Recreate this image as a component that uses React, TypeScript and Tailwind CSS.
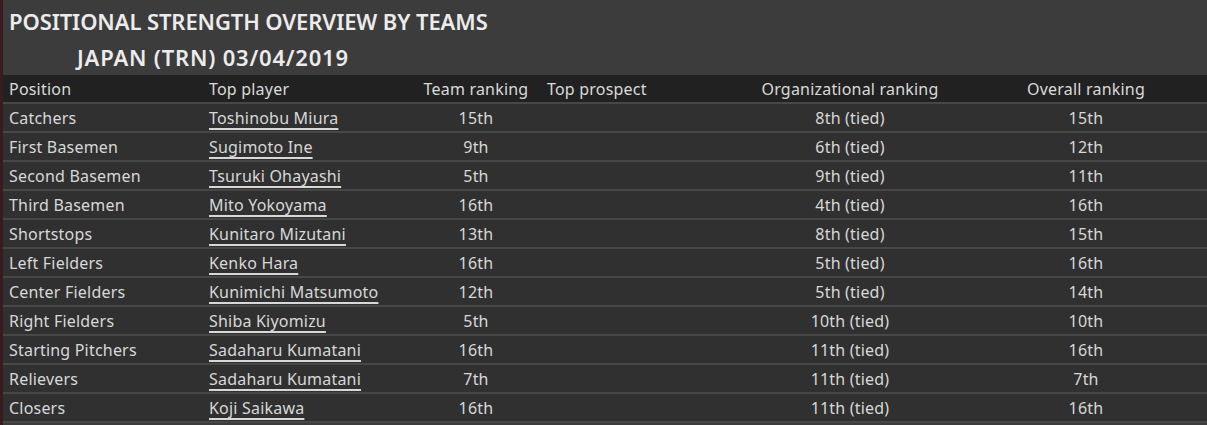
import React from "react";

const rows = [
  ["Catchers", "Toshinobu Miura", "15th", "8th (tied)", "15th"],
  ["First Basemen", "Sugimoto Ine", "9th", "6th (tied)", "12th"],
  ["Second Basemen", "Tsuruki Ohayashi", "5th", "9th (tied)", "11th"],
  ["Third Basemen", "Mito Yokoyama", "16th", "4th (tied)", "16th"],
  ["Shortstops", "Kunitaro Mizutani", "13th", "8th (tied)", "15th"],
  ["Left Fielders", "Kenko Hara", "16th", "5th (tied)", "16th"],
  ["Center Fielders", "Kunimichi Matsumoto", "12th", "5th (tied)", "14th"],
  ["Right Fielders", "Shiba Kiyomizu", "5th", "10th (tied)", "10th"],
  ["Starting Pitchers", "Sadaharu Kumatani", "16th", "11th (tied)", "16th"],
  ["Relievers", "Sadaharu Kumatani", "7th", "11th (tied)", "7th"],
  ["Closers", "Koji Saikawa", "16th", "11th (tied)", "16th"],
];

export default function App() {
  return (
    <div
      className="w-[1207px] h-[425px] overflow-hidden flex bg-[#3c3c3c] text-[#dcdcdc]"
      style={{ fontFamily: '"Noto Sans", "Open Sans", sans-serif' }}
    >
      <div className="w-[3px] shrink-0 bg-[#3b1a1f]" />
      <div className="flex-1 flex flex-col">
        <div className="h-[75px] pl-[6px] flex flex-col">
          <div className="h-[38px] flex items-center text-[22px] font-semibold tracking-[-0.1px] text-[#ececec] leading-none pt-[4px]">
            POSITIONAL STRENGTH OVERVIEW BY TEAMS
          </div>
          <div className="h-[37px] flex items-center pl-[68px] text-[22px] font-semibold tracking-[0.8px] text-[#ececec] leading-none">
            JAPAN (TRN) 03/04/2019
          </div>
        </div>
        <div className="h-[29px] shrink-0 bg-[#212121] border-b-2 border-[#474747] flex items-center text-[16px] tracking-[0.2px] text-[#dadada]">
          <div className="w-[203px] pl-[6px]">Position</div>
          <div className="w-[210px] pl-[3px]">Top player</div>
          <div className="w-[120px] text-center">Team ranking</div>
          <div className="w-[204px] pl-[11px]">Top prospect</div>
          <div className="w-[220px] text-center">Organizational ranking</div>
          <div className="flex-1 text-center pl-[5px]">Overall ranking</div>
        </div>
        {rows.map((r, i) => (
          <div
            key={i}
            className="h-[29px] shrink-0 bg-[#303030] border-b-2 border-[#474747] flex items-center text-[16px] tracking-[0.2px] text-[#d8d8d8]"
          >
            <div className="w-[203px] pl-[6px]">{r[0]}</div>
            <div className="w-[210px] pl-[3px]">
              <span className="underline underline-offset-[4px] decoration-[1.5px]">{r[1]}</span>
            </div>
            <div className="w-[120px] text-center">{r[2]}</div>
            <div className="w-[204px]" />
            <div className="w-[220px] text-center">{r[3]}</div>
            <div className="flex-1 text-center pl-[5px]">{r[4]}</div>
          </div>
        ))}
      </div>
    </div>
  );
}
